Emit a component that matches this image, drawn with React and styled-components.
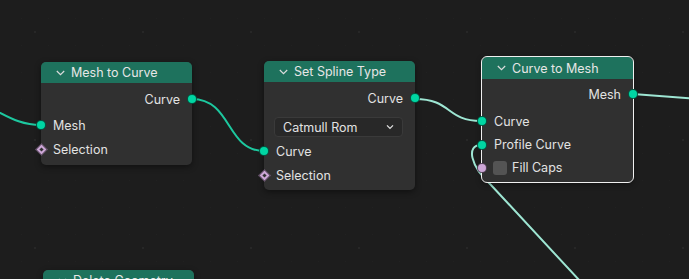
import React from "react";
import styled, { createGlobalStyle, css } from "styled-components";

const Global = createGlobalStyle`
  html, body { margin: 0; padding: 0; background: #1d1d1d; }
  body { font-family: Inter, "Noto Sans", sans-serif; }
`;

const Canvas = styled.div`
  position: relative;
  width: 689px;
  height: 279px;
  overflow: hidden;
  background-color: #1d1d1d;
  background-image:
    radial-gradient(circle, rgba(255,255,255,0.045) 0.8px, transparent 1.2px),
    radial-gradient(circle, rgba(255,255,255,0.018) 0.6px, transparent 1px);
  background-size: 108px 108px, 27px 27px;
  background-position: -19px -22px, -19px -22px;
`;

const Links = styled.svg`
  position: absolute;
  left: 0;
  top: 0;
  width: 689px;
  height: 279px;
  overflow: visible;
`;

const Node = styled.div`
  position: absolute;
  width: 151px;
  border-radius: 5px;
  background: #303030;
  box-shadow: 0 2px 6px rgba(0, 0, 0, 0.45);
  color: #e2e2e2;
  font-size: 12.5px;
  box-sizing: border-box;
  padding-bottom: ${(p) => p.$pb || 4}px;
  ${(p) =>
    p.$selected &&
    css`
      outline: 1.2px solid #f0f0f0;
      outline-offset: 0px;
    `}
`;

const Header = styled.div`
  height: ${(p) => p.$h || 21}px;
  background: #1e725d;
  border-radius: 5px 5px 0 0;
  display: flex;
  align-items: center;
  padding-left: 15px;
  gap: 6px;
  color: #e6e6e6;
`;

const Chevron = () => (
  <svg width="9" height="6" viewBox="0 0 9 6">
    <path d="M0.8 1 L4.5 4.6 L8.2 1" fill="none" stroke="#dcdcdc" strokeWidth="1.2" />
  </svg>
);

const Row = styled.div`
  position: relative;
  height: ${(p) => p.$h || 24}px;
  display: flex;
  align-items: center;
  justify-content: ${(p) => (p.$out ? "flex-end" : "flex-start")};
  padding: 0 12px;
  margin-top: ${(p) => p.$mt || 0}px;
  gap: 5px;
`;

const FieldRow = styled.div`
  height: 22px;
  margin-top: 5px;
  padding-top: 2px;
  box-sizing: border-box;
`;

const Socket = styled.span`
  position: absolute;
  top: 50%;
  ${(p) => (p.$out ? "right: -5px;" : "left: -5px;")}
  width: 10px;
  height: 10px;
  margin-top: -5px;
  box-sizing: border-box;
  border-radius: 50%;
  background: ${(p) => p.$color || "#00d6a3"};
  border: 1px solid rgba(0, 0, 0, 0.6);
`;

const Diamond = styled.span`
  position: absolute;
  top: 50%;
  left: -4.5px;
  width: 9px;
  height: 9px;
  margin-top: -4.5px;
  box-sizing: border-box;
  background: #cca6d6;
  border: 1px solid rgba(0, 0, 0, 0.6);
  transform: rotate(45deg);
  &::after {
    content: "";
    position: absolute;
    left: 2px;
    top: 2px;
    width: 3px;
    height: 3px;
    background: #303030;
  }
`;

const Dropdown = styled.div`
  margin: 0 12px 0 10px;
  height: 20px;
  border-radius: 4px;
  background: #282828;
  border: 1px solid #3a3a3a;
  box-sizing: border-box;
  display: flex;
  align-items: center;
  justify-content: space-between;
  padding: 0 8px;
  color: #e2e2e2;
`;

const Check = styled.span`
  width: 14px;
  height: 14px;
  border-radius: 3px;
  background: #545454;
  margin-left: -1px;
`;

const Small = () => (
  <svg width="8" height="6" viewBox="0 0 8 6">
    <path d="M1 1.4 L4 4.4 L7 1.4" fill="none" stroke="#e0e0e0" strokeWidth="1.3" />
  </svg>
);

export default function App() {
  const teal = "#1dc89f";
  const hi = "#9ee6d3";
  return (
    <Canvas>
      <Global />
      <Links>
        <path d="M-50 98 C -5 100, 5 125, 41 125" stroke={teal} strokeWidth="2" fill="none" />
        <path d="M192 99 C 232 99, 226 151, 264 151" stroke={teal} strokeWidth="2" fill="none" />
        <path d="M415 99 C 452 99, 446 121, 481 121" stroke={hi} strokeWidth="2" fill="none" />
        <path d="M633 94 L 700 99" stroke={hi} strokeWidth="2" fill="none" />
        <path d="M481 145 C 466 145, 470 166, 491 185 L 580 281" stroke={hi} strokeWidth="2" fill="none" />
      </Links>

      <Node style={{ left: 41, top: 62 }}>
        <Header><Chevron />Mesh to Curve</Header>
        <Row $out $mt={4}>Curve<Socket $out /></Row>
        <Row $mt={2}><Socket />Mesh</Row>
        <Row><Diamond />Selection</Row>
      </Node>

      <Node style={{ left: 264, top: 61 }} $pb={3}>
        <Header><Chevron />Set Spline Type</Header>
        <Row $out $mt={4}>Curve<Socket $out /></Row>
        <FieldRow>
          <Dropdown>Catmull Rom<Small /></Dropdown>
        </FieldRow>
        <Row $mt={2}><Socket />Curve</Row>
        <Row><Diamond />Selection</Row>
      </Node>

      <Node style={{ left: 482, top: 57 }} $selected $pb={3}>
        <Header $h={22}><Chevron />Curve to Mesh</Header>
        <Row $out $mt={3}>Mesh<Socket $out /></Row>
        <Row $mt={3}><Socket />Curve</Row>
        <Row $h={23}><Socket />Profile Curve</Row>
        <Row $h={23}><Socket $color="#cca6d6" /><Check />Fill Caps</Row>
      </Node>

      <Node style={{ left: 43, top: 270 }}>
        <Header><Chevron />Delete Geometry</Header>
        <Row $mt={4}>Geometry</Row>
      </Node>
    </Canvas>
  );
}
